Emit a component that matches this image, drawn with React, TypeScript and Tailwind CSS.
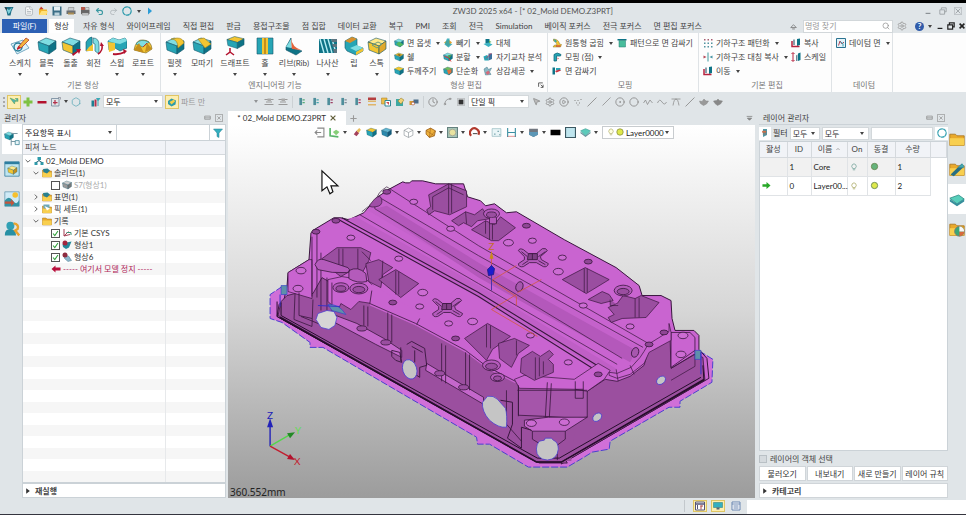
import type { ReactNode } from "react"
import {
  Circle,
  CircleDot,
  CirclePlay,
  Clock,
  FileText,
  Hexagon,
  MousePointer2,
  Redo2,
  Search,
  Settings,
  Slash,
  Spline,
  Undo2,
} from "lucide-react"

const TEAL = ["#7fdde2", "#27a5b5", "#0e7386"]
const GOLD = ["#ffe98a", "#f3c531", "#c48f1c"]

function Svg({ children, className = "size-3", box = "0 0 20 20" }: { children: ReactNode; className?: string; box?: string }) {
  return (
    <svg viewBox={box} className={`shrink-0 ${className}`} fill="none" aria-hidden="true">
      {children}
    </svg>
  )
}

function CubeShape({ top = TEAL[0], left = TEAL[1], right = TEAL[2] }: { top?: string; left?: string; right?: string }) {
  return (
    <g stroke="#14566a" strokeWidth=".6" strokeLinejoin="round">
      <path d="M1 6 9 2l10 3-7 5z" fill={top} />
      <path d="M1 6l11 4v8L2 14z" fill={left} />
      <path d="M12 10l7-5v8l-7 5z" fill={right} />
    </g>
  )
}

function Caret({ className = "" }: { className?: string }) {
  return (
    <svg viewBox="0 0 4 3" className={`w-1 h-[3px] shrink-0 ${className}`} aria-hidden="true">
      <path d="M0 0h4L2 3z" fill="#444" />
    </svg>
  )
}

const bigIcons: Record<string, ReactNode> = {
  sketch: (
    <>
      <path d="M1 8l12-4 6 8-12 6z" fill="#dff3fa" stroke="#5896b4" strokeWidth=".8" />
      <circle cx="8" cy="11" r="4" stroke="#247d99" strokeWidth="1.4" />
      <path d="M8 11 16 2l3 2-8 8z" fill="#f3b43c" stroke="#b23b2a" strokeWidth=".8" />
      <path d="M7 12l2-2 2 2-4 2z" fill="#c01f30" />
    </>
  ),
  block: <CubeShape />,
  extrude: (
    <>
      <CubeShape left={GOLD[1]} />
      <path d="M11 18l5-3-1-2 5 0-2 5-1-2-5 4z" fill="#b3122e" />
    </>
  ),
  revolve: (
    <>
      <path d="M2 15V6q3-5 6-5v13z" fill={TEAL[1]} stroke="#14566a" strokeWidth=".6" />
      <path d="M9 2q6 0 6 7v9l-4-3V8L9 7z" fill={TEAL[0]} stroke="#14566a" strokeWidth=".6" />
      <path d="M2 15l7 0V8l-4 3z" fill={GOLD[1]} />
      <path d="M14 18q5-3 4-9" stroke="#b3122e" strokeWidth="1.6" />
      <path d="M16 10l1-4 3 4z" fill="#b3122e" />
    </>
  ),
  sweep: (
    <>
      <path d="M1 5l5-3 6 2 6-2 2 3v7l-7 3-5-3-6 2z" fill={TEAL[1]} stroke="#14566a" strokeWidth=".6" />
      <path d="M1 5l5-3 6 2 6-2 2 3-7 3-5-1z" fill={TEAL[0]} />
      <path d="M1 6l7 1v7l-6 2z" fill={GOLD[1]} />
      <path d="M6 18q6 1 12-2" stroke="#b3122e" strokeWidth="1.8" />
      <path d="M16 13l4 2-3 3z" fill="#b3122e" />
    </>
  ),
  loft: (
    <>
      <path d="M1 14Q3 3 10 4q8 0 9 9l-6 4z" fill={GOLD[1]} stroke="#7c6a28" strokeWidth=".7" />
      <path d="M3 8q4-6 13-2l-6 5z" fill={TEAL[0]} stroke="#247d89" strokeWidth=".6" />
      <path d="M1 14l5-7 5 10zM12 16l2-9 5 6z" fill={GOLD[2]} />
      <path d="M10 11l4-4" stroke="#c0392b" />
    </>
  ),
  fillet: (
    <>
      <CubeShape />
      <path d="M6 3q7 0 7 9l6-5Q18 2 12 2z" fill={GOLD[1]} stroke="#9d8320" strokeWidth=".6" />
    </>
  ),
  chamfer: (
    <>
      <CubeShape />
      <path d="M6 3l7 9 6-4-7-6z" fill={GOLD[1]} stroke="#9d8320" strokeWidth=".6" />
    </>
  ),
  draft: (
    <>
      <g transform="translate(1 -1) scale(.95 .75)"><CubeShape top={GOLD[1]} /></g>
      <path d="M5 12v4l-4 3m4-3 4 3" stroke="#b3122e" strokeWidth="1.5" />
    </>
  ),
  hole: (
    <>
      <path d="M2 2h16v16H2z" fill={TEAL[1]} stroke="#14566a" strokeWidth=".6" />
      <path d="M7 2h6v16H7z" fill={GOLD[1]} />
      <path d="M9 2h2v16H9z" fill={GOLD[2]} />
    </>
  ),
  rib: (
    <>
      <path d="M2 11 7 2v10l11 3-6 4-10-5z" fill={TEAL[2]} stroke="#14566a" strokeWidth=".6" />
      <path d="M7 2q1 9 10 12l-9-1z" fill="#e4643a" />
      <path d="M2 11l5 1v-9" fill={TEAL[0]} />
    </>
  ),
  thread: (
    <>
      <path d="M1 3h18v14H1z" fill={TEAL[2]} />
      <path d="M2 3l4 14M6 3l4 14M10 3l4 14M14 3l4 14" stroke="#b6ecf2" strokeWidth="1.4" />
      <path d="M13 3h6v3h-5zM14 8h5v3h-4zM15 13h4v4h-3z" fill="#5c7480" />
    </>
  ),
  lip: (
    <>
      <path d="M1 5 8 1l5 2v7l6 2v3l-7 4-9-4-2-3z" fill={TEAL[1]} stroke="#14566a" strokeWidth=".6" />
      <path d="M1 5 8 1l5 2-7 4z" fill="#d7902c" />
      <path d="M6 12l7-3 6 3-7 3z" fill={TEAL[0]} />
      <path d="M12 16l7-4v3l-7 4z" fill={GOLD[1]} />
    </>
  ),
  stock: (
    <>
      <CubeShape top={GOLD[0]} left={GOLD[1]} right="#e0a92c" />
      <path d="M5 9l6-3 4 2-5 4z" stroke="#6e9b7c" />
    </>
  ),
}

type Tool = { label: string; icon: string; width: string; menu?: boolean }

const basicTools: Tool[] = [
  { label: "스케치", icon: "sketch", width: "w-7", menu: true },
  { label: "블록", icon: "block", width: "w-[25px]", menu: true },
  { label: "돌출", icon: "extrude", width: "w-[23px]" },
  { label: "회전", icon: "revolve", width: "w-[23px]" },
  { label: "스윕", icon: "sweep", width: "w-6", menu: true },
  { label: "로프트", icon: "loft", width: "w-7", menu: true },
]

const engineeringTools: Tool[] = [
  { label: "필렛", icon: "fillet", width: "w-[27px]", menu: true },
  { label: "모따기", icon: "chamfer", width: "w-7" },
  { label: "드래프트", icon: "draft", width: "w-[38px]", menu: true },
  { label: "홀", icon: "hole", width: "w-[22px]", menu: true },
  { label: "리브(Rib)", icon: "rib", width: "w-9", menu: true },
  { label: "나사산", icon: "thread", width: "w-[31px]", menu: true },
  { label: "립", icon: "lip", width: "w-[22px]" },
  { label: "스톡", icon: "stock", width: "w-[23px]", menu: true },
]

function BigTool({ tool }: { tool: Tool }) {
  return (
    <button className={`flex flex-col items-center ${tool.width}`}>
      <Svg className="size-5">{bigIcons[tool.icon]}</Svg>
      <span className="mt-px whitespace-nowrap leading-3">{tool.label}</span>
      {tool.menu && <Caret className="mt-1" />}
    </button>
  )
}

const smallIcons: Record<string, ReactNode> = {
  offset: <><CubeShape /><path d="M4 12l6-5 9 6-8 5z" fill="#4fb661" /></>,
  shell: <><CubeShape top={GOLD[1]} /><path d="M6 6l4-2 5 2-4 2z" fill="#7c5e1e" /></>,
  thicken: <><CubeShape top="#62c28d" /><path d="M1 5 9 2l10 3-8 4z" fill={GOLD[1]} /></>,
  subtract: <><path d="M2 9l9-6 7 6-8 8z" fill="#e3a32d" /><path d="M8 1h5v10l6 1-8 7-8-6z" fill={TEAL[1]} opacity=".85" /></>,
  split: <><CubeShape /><path d="M3 9l7 2 6 8" stroke="#d83a3a" strokeWidth="2" /><path d="M9 7l8-2-4 8z" fill="#4f9f4c" /></>,
  simplify: <><CubeShape top="#71bd5e" /><path d="M8 9l9-3v7l-6 4z" fill="#e2733c" /></>,
  replace: <><path d="M5 2h8v9H5z" fill={TEAL[2]} /><path d="M1 12l10-3 8 4-8 5z" fill="#3bb3c3" /><path d="M12 5l5 3-5 2z" fill="#62b450" /></>,
  intersect: <><path d="M1 9l7-3 3 3v8H3z" fill={TEAL[1]} /><path d="M11 3h7v11l-7 3z" fill="#3a6f9c" /><path d="M6 13 17 2" stroke="#cc3556" strokeWidth="1.5" /></>,
  inlay: <><path d="M2 6l6-4 3 5 6-3-4 8 3 5-11 1z" fill="#8db9c5" stroke="#3e7888" /><path d="M5 13l6-4 3 5-5 4z" fill="#d36b7b" /></>,
  bend: <><path d="M3 2q11 1 12 10l4 1-2 5H2l3-4h5q-1-7-7-8z" fill={GOLD[1]} stroke="#8a752a" /><path d="M3 2q6 1 7 5l-4 2z" fill="#3ba89f" /><path d="M8 16h9" stroke="#c12b3b" strokeWidth="2" /></>,
  morph: <><path d="M4 5q6-6 14 0l-1 3H9v10H4z" fill={TEAL[1]} stroke="#0e6375" strokeWidth="1.5" /><path d="M11 11l3 2-3 2z" fill="#d55" /></>,
  wrap: <><path d="M1 3h5v14H1z" fill={TEAL[2]} /><path d="M8 4h9v5H8z" fill={TEAL[1]} /><path d="M9 13l-3-3 9-3 3 2z" fill="#cb3342" /></>,
  wrapPattern: <><path d="M1 2h18v3H1z" fill={TEAL[2]} /><path d="M4 5h13v13H4z" fill="#49bd9c" stroke="#277b70" /></>,
  pattern: <>{[3, 10, 17].map((x) => [3, 10, 17].map((y) => <rect key={`${x}-${y}`} x={x - 1} y={y - 1} width="3" height="3" fill={y === 3 ? "#a55d71" : "#5294a0"} />))}</>,
  mirror: <><path d="M10 1v18" stroke="#3e999e" strokeWidth="2" /><path d="M1 7l6 3-6 3z" fill="#b44958" /><path d="M19 7l-6 3 6 3z" fill="#4694a4" /></>,
  move: <><path d="M4 3h4v11H4z" fill="#8ba1ac" /><path d="M12 2l6-1v13l-6 2z" fill={TEAL[2]} /><path d="M2 6v11h15" stroke="#b7233f" strokeWidth="3" /></>,
  scale: <><path d="M4 2v16M1 4l3-3 3 3M1 16l3 3 3-3" stroke="#b7233f" strokeWidth="2" /><path d="M10 7l3-2v13h-3z" fill="#698a99" /><path d="M14 3l5-2v15l-5 2z" fill={TEAL[2]} /></>,
  datum: <><path d="M1 1h18v18H1z" fill="#e4f3f9" stroke="#2b7391" strokeWidth="2" /><path d="M5 15l3-9 4 6 4-4" stroke="#b44758" strokeWidth="2" /><path d="M9 8l5 3v6" stroke="#3a9eb0" strokeWidth="2" /></>,
}

function SmallTool({ icon, label, menu }: { icon: string; label: string; menu?: boolean }) {
  return (
    <button className="flex h-[14px] items-center gap-[3px] whitespace-nowrap">
      <Svg className="size-[10px]">{smallIcons[icon]}</Svg>
      {label}
      {menu && <Caret className="ml-0.5" />}
    </button>
  )
}

function Group({ title, width, children, launcher }: { title: string; width: string; children: ReactNode; launcher?: boolean }) {
  return (
    <section className={`flex shrink-0 flex-col border-r border-[#dfe3e6] ${width}`}>
      <div className="flex flex-1 pt-[3px]">{children}</div>
      <div className="flex h-[14px] items-center text-[#777]">
        <h2 className="flex-1 text-center">{title}</h2>
        {launcher && (
          <button aria-label="형상 편집 설정" className="mr-[3px]">
            <Svg className="size-[6px]"><path d="M2 16V3h14M9 9l8 8M17 9v9H9" stroke="#555" strokeWidth="3" /></Svg>
          </button>
        )}
      </div>
    </section>
  )
}

function Select({ label, value, className = "" }: { label: string; value: string; className?: string }) {
  return (
    <div className={`flex shrink-0 items-center border border-[#d3d8db] bg-white ${className}`}>
      <select aria-label={label} className="h-full min-w-0 flex-1 appearance-none bg-transparent pl-0.5 outline-none">
        <option>{value}</option>
      </select>
      <Caret className="pointer-events-none mr-1" />
    </div>
  )
}

function Tb({ label, children, active }: { label: string; children?: ReactNode; active?: boolean }) {
  return (
    <button
      aria-label={label}
      className={`flex h-[14px] w-[14px] shrink-0 items-center justify-center ${active ? "border border-[#dfc564] bg-[#fdeeb0]" : ""}`}
    >
      {children}
    </button>
  )
}

function QuickAccess() {
  return (
    <div className="flex flex-[9] items-center">
      <Svg className="mr-2 size-[10px]">
        <path d="M1 2h18l-4 8-2 9H7L5 10z" fill="#1f6f86" />
        <path d="M4 4l6 4 6-5-4 10-3 3z" fill="#7fd0da" />
        <path d="M1 2l5 2-1 5z" fill="#333" />
      </Svg>
      <Tb label="새로 만들기"><FileText className="size-[10px]" fill="#fff" stroke="#a3abb0" /></Tb>
      <Tb label="열기">
        <Svg className="size-[10px]"><path d="M2 5h7l2 2h7v11H2z" fill="#f1b62b" /><path d="M2 18l5-8h13l-4 8z" fill="#ffe07a" /><path d="M3 7 6 1l5 5z" fill="#c83a2e" /></Svg>
      </Tb>
      <Tb label="저장">
        <Svg className="size-[10px]"><path d="M1 1h18v18H1z" fill="#3a6d85" /><path d="M4 1h12v8H4z" fill="#e6eff3" /><path d="M5 13h10v6H5z" fill="#bcd3dc" /></Svg>
      </Tb>
      <Tb label="인쇄">
        <Svg className="size-[10px]"><path d="M1 9h18v7H1z" fill="#6a6f74" /><path d="M5 3h11l-1 6H4z" fill="#cdd1d4" stroke="#777" /><path d="M4 13h12v4H4z" fill="#a98c53" /></Svg>
      </Tb>
      <Tb label="내보내기">
        <Svg className="size-[10px]"><path d="M2 8h17v8H2z" fill="#666" /><path d="M2 2h8v6H2z" fill="#b75a4c" /><path d="M11 3h7v5h-7zM4 14h13v4H4z" fill="#d4d6d8" stroke="#777" /></Svg>
      </Tb>
      <Tb label="실행 취소"><Undo2 className="size-[9px]" stroke="#3e9aa3" strokeWidth={3} /></Tb>
      <Tb label="다시 실행"><Redo2 className="size-[9px]" stroke="#aab0b4" strokeWidth={2} /></Tb>
      <Tb label="재생성"><Circle className="size-[10px]" stroke="#2d9aac" strokeWidth={3} strokeDasharray="7 3" /></Tb>
      <Caret className="mx-[3px]" />
      <Svg className="ml-0.5 size-2"><path d="M5 1l10 9-10 9z" fill="#2b9cd6" /></Svg>
    </div>
  )
}

function WindowButtons({ dark }: { dark?: boolean }) {
  const color = dark ? "#222" : "#8b9195"
  return (
    <div className={`flex items-center ${dark ? "gap-[3px]" : "gap-[7px]"}`}>
      <button aria-label="최소화"><Svg className="size-2"><path d="M4 16h12" stroke={color} strokeWidth="3" /></Svg></button>
      <button aria-label="복원"><Svg className="size-2"><path d="M6 6V2h12v10h-4M2 7h12v11H2z" stroke={color} strokeWidth={dark ? 3 : 1.8} /></Svg></button>
      <button aria-label="닫기"><Svg className="size-2">{!dark && <path d="M1 1h18v18H1z" stroke={color} />}<path d="M4 4l12 12M16 4 4 16" stroke={color} strokeWidth={dark ? 4 : 1.8} /></Svg></button>
    </div>
  )
}

const tabs = ["자유 형식", "와이어프레임", "직접 편집", "판금", "용접구조물", "점 집합", "데이터 교환", "복구", "PMI", "조회", "전극", "Simulation", "베이직 포커스", "전극 포커스", "면 편집 포커스"]

function TopBar() {
  return (
    <header>
      <div className="h-[3px] bg-black" />
      <div className="flex h-4 items-center pl-1 pr-1">
        <QuickAccess />
        <h1 className="text-[#555]">ZW3D 2025 x64 - [* 02_Mold DEMO.Z3PRT]</h1>
        <div className="flex flex-[7] justify-end"><WindowButtons /></div>
      </div>
      <nav className="flex h-[14px] items-stretch pl-0.5">
        <button className="w-[45px] bg-[#2c60b4] text-white">파일(F)</button>
        <button className="ml-0.5 w-[25px] bg-white text-[#333]">형상</button>
        <div className="flex flex-1 items-center pl-[3px]">
          {tabs.map((tab) => (
            <button key={tab} className="whitespace-nowrap px-1.5 text-[#444]">{tab}</button>
          ))}
        </div>
        <div className="flex items-center gap-1">
          <Svg className="mr-0.5 size-[7px]"><path d="M2 13l8-8 8 8zM6 17h8" stroke="#666" strokeWidth="2" /></Svg>
          <label className="flex h-[13px] w-[90px] items-center border border-[#d2d7da] bg-white">
            <input aria-label="명령 찾기" placeholder="명령 찾기" className="w-0 flex-1 pl-px outline-none placeholder:text-[#999]" />
            <Search className="mr-0.5 size-2 text-[#888]" />
          </label>
          <button aria-label="설정"><Settings className="size-[10px] text-[#999]" /></button>
          <button aria-label="도움말" className="ml-1 flex size-[9px] items-center justify-center rounded-full bg-[#315caa] text-[8px] font-bold leading-none text-white">?</button>
          <Caret />
          <WindowButtons dark />
        </div>
      </nav>
    </header>
  )
}

function Ribbon() {
  return (
    <div className="flex h-[59px] overflow-hidden bg-[#fdfdfd] text-[#444]">
      <Group title="기본 형상" width="w-[161px] pl-1.5">
        {basicTools.map((tool) => <BigTool key={tool.label} tool={tool} />)}
      </Group>
      <Group title="엔지니어링 기능" width="w-[229px]">
        {engineeringTools.map((tool) => <BigTool key={tool.label} tool={tool} />)}
      </Group>
      <Group title="형상 편집" width="w-[158px] pl-1" launcher>
        <div className="w-[49px]">
          <SmallTool icon="offset" label="면 옵셋" menu />
          <SmallTool icon="shell" label="쉘" />
          <SmallTool icon="thicken" label="두께주기" />
        </div>
        <div className="w-10">
          <SmallTool icon="subtract" label="빼기" menu />
          <SmallTool icon="split" label="분할" menu />
          <SmallTool icon="simplify" label="단순화" />
        </div>
        <div>
          <SmallTool icon="replace" label="대체" />
          <SmallTool icon="intersect" label="자기교차 분석" />
          <SmallTool icon="inlay" label="상감세공" menu />
        </div>
      </Group>
      <Group title="모핑" width="w-[151px] pl-1">
        <div className="w-[65px]">
          <SmallTool icon="bend" label="원통형 굽힘" menu />
          <SmallTool icon="morph" label="모핑 (점)" menu />
          <SmallTool icon="wrap" label="면 감싸기" />
        </div>
        <div>
          <SmallTool icon="wrapPattern" label="패턴으로 면 감싸기" />
        </div>
      </Group>
      <Group title="기본 편집" width="w-[133px] pl-1">
        <div className="w-[88px]">
          <SmallTool icon="pattern" label="기하구조 패턴화" menu />
          <SmallTool icon="mirror" label="기하구조 대칭 복사" menu />
          <SmallTool icon="move" label="이동" menu />
        </div>
        <div>
          <SmallTool icon="move" label="복사" />
          <SmallTool icon="scale" label="스케일" />
        </div>
      </Group>
      <Group title="데이텀" width="w-[61px] pl-1">
        <SmallTool icon="datum" label="데이텀 면" menu />
      </Group>
    </div>
  )
}

const curveIcons: [string, ReactNode][] = [
  ["선택", <MousePointer2 className="size-[9px]" fill="#bbb" />],
  ["옵션", <Settings className="size-[10px]" />],
  ["재생", <CirclePlay className="size-[10px]" />],
  ["점", <Svg className="size-[10px]"><path d="M3 7h2m4 0h2m4-2h2M6 12h2m4 0h2M9 16h2" stroke="currentColor" strokeWidth="2" /></Svg>],
  ["선", <Slash className="size-[10px]" />],
  ["중간점", <Slash className="size-[9px]" />],
  ["중심", <CircleDot className="size-[10px]" />],
  ["원", <Circle className="size-[10px]" />],
  ["꺾은선", <Svg className="size-[10px]"><path d="M1 12l4-6 4 9 5-9 5 6" stroke="currentColor" strokeWidth="1.5" /></Svg>],
  ["곡선", <Svg className="size-[10px]"><path d="M1 12q4-10 9-2t9 0" stroke="currentColor" strokeWidth="1.5" /></Svg>],
  ["호", <Svg className="size-[10px]"><path d="M1 4h18M4 17Q6 4 10 4t6 13" stroke="currentColor" strokeWidth="1.5" /></Svg>],
  ["접선", <Slash className="size-[10px]" />],
  ["면", <Svg className="size-[10px]"><path d="M1 8l5 1 4-5 4 4 5 0-4 6-6 3-6-4z" fill="#999" stroke="currentColor" /></Svg>],
  ["곡면", <Svg className="size-[10px]"><path d="M1 8l6-1 3-3 3 3 6 1-4 6-6 3-5-4z" fill="#888" stroke="currentColor" /></Svg>],
]

function SelectionBar() {
  return (
    <div role="toolbar" aria-label="선택" className="flex h-[19px] items-center pl-[3px] text-[#888]">
      <span className="mr-0.5 h-[10px] border-l-2 border-dotted border-[#aaa]" />
      <Tb label="필터" active><Svg className="size-[10px]"><path d="M2 2l9 12 1-5 5-1zM12 3h6v6" fill="#52b4b3" stroke="#5c9c4b" /></Svg></Tb>
      <Tb label="추가"><Svg className="size-[10px]"><path d="M7 1h6v6h6v6h-6v6H7v-6H1V7h6z" fill="#7dc242" /></Svg></Tb>
      <Tb label="제거"><Svg className="size-[10px]"><path d="M1 8h18v5H1z" fill="#b3122e" /></Svg></Tb>
      <Tb label="영역 선택"><Svg className="size-[10px]"><path d="M1 3h15v15H1z" stroke="#6a7f94" strokeWidth="1.5" /><path d="M8 6v9M4 11h9" stroke="#b3304a" strokeWidth="2.5" /><path d="M14 1h5v4" stroke="#667" /></Svg></Tb>
      <Caret className="mx-px" />
      <Tb label="다각형"><Hexagon className="size-[10px]" stroke="#69aebc" /></Tb>
      <span className="w-1.5" />
      <Tb label="모델 필터"><Svg className="size-[10px]"><path d="M1 7h5v12H1z" fill="#1d7f91" /><path d="M7 5h4v14H7z" fill="#b3304a" /><path d="M10 2h9l-4 6v10h-2V8z" fill="#3ca8b5" /></Svg></Tb>
      <Select label="필터 유형" value="모두" className="mr-0.5 h-[13px] w-[60px] text-[#222]" />
      <Tb label="파트" active><Svg className="size-[10px]"><path d="M2 8l7-5 9 4-1 8-8 4-7-5z" fill="#2c9caa" /><path d="M5 10l9-5 2 4-7 6z" fill="#f4cf46" /></Svg></Tb>
      <div className="flex h-[13px] w-[83px] items-center">
        <select aria-label="범위" className="h-full flex-1 appearance-none pl-0.5 text-[#999]"><option>파트 만</option></select>
        <Caret className="mr-1 opacity-50" />
      </div>
      {["정렬", "잠금"].map((name) => (
        <Tb key={name} label={name}><Svg className="size-[10px]"><path d="M1 5h18M4 10h12M1 15h18" stroke="#999" strokeWidth="2" /><path d="M7 3h7v5H7z" fill="#aaa" /></Svg></Tb>
      ))}
      <span className="mx-0.5 h-3 w-px bg-[#ccd1d4]" />
      {["#55ad7a", "#45a3ac", "#9a3f63", "#7f8a97", "#b43a5c"].map((color, i) => (
        <Tb key={color} label={`트리 ${i + 1}`}><Svg className="size-[9px]"><path d="M3 2h6v16H3z" fill="#4f8e9b" /><path d="M10 5h5v3h-5zM10 11h5v3h-5z" fill={color} /></Svg></Tb>
      ))}
      <Tb label="속성"><Svg className="size-[10px]"><path d="M2 1h16v5H2z" fill="#b53f3f" /><path d="M2 7h16v3H2zM2 14h16v3H2z" fill="#dfb56a" /></Svg></Tb>
      <Tb label="복사"><Svg className="size-[10px]"><path d="M1 2h11v12H1z" fill="#ebbd49" stroke="#a87a1b" /><path d="M8 7h11v11H8z" fill="#fff" stroke="#2f8895" strokeWidth="2" /><path d="M10 10h6v6z" fill="#cf4f4f" /></Svg></Tb>
      <Tb label="붙여넣기"><Svg className="size-[10px]"><path d="M2 4h14v14H2z" fill="#3fa8a1" /><path d="M6 8l6-6 6 4-6 8z" fill="#f0d176" stroke="#907625" /></Svg></Tb>
      <Tb label="연결"><Svg className="size-[10px]"><path d="M1 8h10v8H1z" fill="#d49a31" /><path d="M9 5h10v8H9z" fill="#4b6c89" /><circle cx="8" cy="13" r="3" fill="#fff" stroke="#933" /></Svg></Tb>
      <span className="mx-0.5 h-3 w-px bg-[#ccd1d4]" />
      <Tb label="기록"><Clock className="size-[10px]" /></Tb>
      <Tb label="경로"><Spline className="size-[9px]" /></Tb>
      <Tb label="정지"><Svg className="size-2"><path d="M1 1h18v18H1z" stroke="#888" strokeWidth="1" /><path d="M4 4h12v12H4z" fill="#333" /></Svg></Tb>
      <Select label="픽 방식" value="단일 픽" className="h-[13px] w-[61px] text-[#222]" />
      {curveIcons.map(([name, icon]) => <Tb key={name} label={name}>{icon}</Tb>)}
    </div>
  )
}

function PanelTitle({ title }: { title: string }) {
  return (
    <div className="flex h-[13px] shrink-0 items-center gap-1 pl-1 pr-[3px]">
      <h2 className="flex-1 text-[#444]">{title}</h2>
      <button aria-label="고정"><Svg className="size-[7px]"><path d="M2 6h16v9H2zM2 11h16" stroke="#888" strokeWidth="2" /></Svg></button>
      <button aria-label="닫기"><Svg className="size-2"><path d="M1 1h18v18H1zM6 6l8 8M14 6l-8 8" stroke="#888" strokeWidth="1.6" /></Svg></button>
    </div>
  )
}

const folder = <><path d="M1 4h7l2 2h9v12H1z" fill="#e9a92a" stroke="#a8721a" /><path d="M1 9h18v9H1z" fill="#f8cf4f" /></>

type Node = { label: string; level: number; open?: boolean; checked?: boolean; icon: ReactNode; tone?: string }

const solidFolder = <>{folder}<path d="M2 2l9-1 5 4-6 6-7-3z" fill="#28808f" /></>

const nodes: Node[] = [
  { label: "02_Mold DEMO", level: 0, open: true, icon: <><path d="M7 2h7v6H7zM1 12h6v6H1zM13 12h6v6h-6z" fill="#2f9bab" /><path d="M10 8v3M4 13l6-4 6 4" stroke="#3c7584" strokeWidth="2" /></> },
  { label: "솔리드(1)", level: 1, open: true, icon: solidFolder },
  { label: "S7(형상1)", level: 2, checked: false, tone: "text-[#aaa]", icon: <CubeShape top="#ccc" left="#999" right="#777" /> },
  { label: "표면(1)", level: 1, open: false, icon: solidFolder },
  { label: "픽 세트(1)", level: 1, open: false, icon: <>{folder}<path d="M3 1h12v8H3z" fill="#6da9b8" /><path d="M5 4l5 9 6-4z" fill="#fff" /></> },
  { label: "기록", level: 1, open: true, icon: folder },
  { label: "기본 CSYS", level: 2, checked: true, icon: <><path d="M4 2v14l12-3M4 16l9-9" stroke="#a33f55" strokeWidth="2" /><path d="M9 9h9v5" stroke="#3c8f72" strokeWidth="2" /></> },
  { label: "형상1", level: 2, checked: true, icon: <><path d="M1 8l8-3 10-2-5 12-6 3-6-4z" fill="#23899a" /><circle cx="6" cy="6" r="5" fill="#a3263d" /></> },
  { label: "형상6", level: 2, checked: true, icon: <><path d="M5 7l8 1 6 9-7 2-7-6z" fill="#8fb8cd" stroke="#49788f" /><circle cx="6" cy="6" r="5" fill="#8e2b3f" /></> },
]

function Strip({ items, side }: { items: { name: string; icon: ReactNode }[]; side: "left" | "right" }) {
  const active = side === "left" ? 0 : 2
  return (
    <div className={`flex shrink-0 flex-col ${side === "left" ? "w-5" : "w-[18px] pt-[13px]"}`}>
      {items.map((item, i) => (
        <button key={item.name} aria-label={item.name} className={`flex h-[30px] items-center justify-center ${i === active ? "bg-white" : ""}`}>
          <Svg className="size-4">{item.icon}</Svg>
        </button>
      ))}
    </div>
  )
}

const leftStrip = [
  { name: "관리자", icon: <><g transform="scale(.62)"><CubeShape /></g><path d="M9 13h6M9 10v8M9 3h8" stroke="#7c9aa5" strokeWidth="1.3" /><path d="M14 12h5v5h-5z" fill="#eaf5f8" stroke="#45899b" /></> },
  { name: "파트", icon: <><path d="M1 1h18v18H1z" fill="#bfe5f0" stroke="#3a7fa0" /><path d="M1 1h18v3H1z" fill="#2d7ea0" /><g transform="translate(4 5) scale(.65)"><CubeShape top={GOLD[0]} left={GOLD[1]} right={GOLD[2]} /></g></> },
  { name: "장면", icon: <><path d="M1 1h18v18H1z" fill="#cfeaf6" stroke="#6a9ab2" /><path d="M1 12q5-7 10 0t8-1v8H1z" fill="#3293a4" /><circle cx="14" cy="5" r="3.5" fill="#f6c02d" /><path d="M1 13h8v-3l4 5-4 4v-3H1z" fill="#c4553c" /></> },
  { name: "역할", icon: <><circle cx="8" cy="6" r="5" fill="#31a0b4" /><path d="M1 18q0-8 7-8t7 8z" fill="#2790a4" /><path d="M12 3q7 1 5 7l-3 2 5 6" stroke="#e9a32e" strokeWidth="3" /></> },
]

const rightStrip = [
  { name: "파일", icon: folder },
  { name: "재사용", icon: <>{folder}<path d="M2 17 16 3l3 4L6 19z" fill="#286f83" /><path d="M11 8l6-5 2 5z" fill="#45a7ae" /></> },
  { name: "레이어", icon: <><path d="M1 9l11-4 7 5-9 6z" fill="#58cfbb" stroke="#2c8c84" /><path d="M1 10l9 6 9-6v3l-9 6-9-6z" fill="#378f9c" /></> },
  { name: "색상", icon: <>{folder}<circle cx="13" cy="13" r="6" fill="#3aa678" stroke="#777" /><path d="M13 13l6 0a6 6 0 0 1-6 6z" fill="#d96a3d" /><path d="M13 13V7a6 6 0 0 1 6 6z" fill="#f7f7f7" /></> },
]

function TreeRow({ node }: { node: Node }) {
  const indent = ["pl-0.5", "pl-2.5", "pl-7"][node.level]
  return (
    <li className="grid flex-1 grid-cols-[143px_1fr] even:bg-[#f6f6f6]">
      <div className={`flex items-center gap-0.5 whitespace-nowrap border-r border-[#e7e9eb] ${indent} ${node.tone ?? "text-[#333]"}`}>
        {node.open !== undefined && (
          <Svg className="mr-px size-[6px]"><path d={node.open ? "M2 6l8 8 8-8" : "M6 2l8 8-8 8"} stroke="#555" strokeWidth="3" /></Svg>
        )}
        {node.checked !== undefined ? (
          <label className="flex items-center gap-0.5">
            <input type="checkbox" defaultChecked={node.checked} className="peer sr-only" />
            <Svg className="size-[9px] border border-[#555] bg-white *:opacity-0 peer-checked:*:opacity-100"><path d="M3 10l5 6 9-13" stroke="#30a03a" strokeWidth="3" /></Svg>
            <Svg className="size-[10px]">{node.icon}</Svg>
            {node.label}
          </label>
        ) : (
          <>
            <Svg className="size-[10px]">{node.icon}</Svg>
            {node.label}
          </>
        )}
      </div>
    </li>
  )
}

function Manager() {
  return (
    <aside className="flex w-[226px] shrink-0 flex-col">
      <PanelTitle title="관리자" />
      <div className="flex flex-1 pl-0.5">
        <Strip items={leftStrip} side="left" />
        <div className="flex flex-1 flex-col border border-[#cbd2d7] bg-white">
          <div className="flex h-4 shrink-0 border-b border-[#cbd2d7]">
            <Select label="표시" value="주요항목 표시" className="w-[93px] border-0 text-[#222]" />
            <input aria-label="검색" className="w-0 flex-1 border-x border-[#cbd2d7]" />
            <button aria-label="필터" className="flex w-[15px] items-center justify-center">
              <Svg className="size-[10px]"><path d="M1 2h18l-7 8v9l-4-2v-7z" fill="#35b0c0" stroke="#217f90" /></Svg>
            </button>
          </div>
          <div className="grid h-[14px] shrink-0 grid-cols-[143px_1fr] border-b border-[#d5d9dd] bg-[#f1f3f7] text-[#444]">
            <span className="border-r border-[#d5d9dd] pl-0.5">피쳐 노드</span>
          </div>
          <ul className="flex flex-1 flex-col">
            {nodes.map((node) => <TreeRow key={node.label} node={node} />)}
            <li className="grid flex-1 grid-cols-[143px_1fr] even:bg-[#f6f6f6]">
              <div className="flex items-center gap-0.5 whitespace-nowrap border-r border-[#e7e9eb] pl-7 text-[#ae2459]">
                <Svg className="size-[10px]"><path d="M1 10l8-7v4h10v6H9v4z" fill="#b80f3c" /></Svg>
                ----- 여기서 모델 정지 -----
              </div>
            </li>
            {Array.from({ length: 18 }, (_, i) => (
              <li key={i} className="grid flex-1 grid-cols-[143px_1fr] even:bg-[#f6f6f6]">
                <span className="border-r border-[#e7e9eb]" />
              </li>
            ))}
          </ul>
          <button className="flex h-[15px] shrink-0 items-center gap-1 border-t-2 border-[#cbd2d7] pl-0.5 font-bold text-[#444]">
            <Svg className="size-[6px]"><path d="M4 1l12 9-12 9z" fill="#333" /></Svg>재실행
          </button>
        </div>
      </div>
    </aside>
  )
}

const bores: [number, number, number][] = [
  [415, 201, 4], [352, 237, 4], [452, 228, 4], [400, 258, 4], [302, 270, 5], [299, 288, 5], [424, 292, 5], [421, 306, 4],
  [450, 323, 4], [474, 321, 5], [510, 242, 5], [534, 240, 4], [564, 257, 4], [560, 271, 5], [585, 305, 4], [632, 326, 4],
  [532, 335, 4], [570, 362, 4], [685, 335, 5], [683, 354, 5], [533, 423, 5], [566, 422, 5],
]

const darkBores: [number, number][] = [[394, 302], [457, 338], [528, 225], [590, 261], [388, 191], [337, 220], [317, 231], [651, 344], [600, 374], [666, 332]]

function Spider({ x, y }: { x: number; y: number }) {
  return (
    <g transform={`translate(${x} ${y})`} strokeLinejoin="round">
      <path d="M-15-7q1-3 5-1l5 4h8l6-5q4-1 5 2l-7 6 1 3 7 4q-1 4-5 3l-7-4h-7l-6 4q-5 1-5-3l6-4v-3z" fill="#b55bbd" />
      <path d="M-5-4l-1 6h10l0-6z" fill="#7f3f85" />
      <path d="M-12-6l6 5M12-6l-7 5M-11 7l6-4M12 7l-7-4M-1-4v6" />
    </g>
  )
}

function Mold() {
  return (
    <svg viewBox="228 124 530 374" preserveAspectRatio="xMidYMid slice" fill="none" className="absolute inset-0 h-full w-full" role="img" aria-label="02_Mold DEMO">
      <path
        d="M283 286l-12 8v24l12 4 28 20v5h13l154 90 1 7h12l39 23h39l17-10 8-5 17-3 1-8 59-34h11v-6l32-19 1-23-16-10z"
        fill="#d06fd8" stroke="#4b3fd0" strokeDasharray="7 2"
      />
      <path
        d="M278 316l2-12 5-5 3-14 1-13 21-13 2-27 3-3 20-12 7 0 8 2 15-7 14-16 12-8 13-7 3 1 4 0 2-2 11 0 13 3h28l4 13 13 4 5 5 9-2 12 9 10-1 48 28 52 28 23 18 3 10h19l10 5 1 18 3 12h19l5 5v14l8 9 2 20-145 84h-25z"
        fill="#c964d0" stroke="#38163d" strokeWidth="1"
      />

      {/* channel across the core */}
      <path d="M368 209 382 198l98 57 170 97-5 14-22-9-143-82z" fill="#c462cb" />
      <path d="M376 208l12-3 92 57 158 88-6 12-152-85z" fill="#b458bb" />
      <path d="M349 218l8-2 123 69 139 84-4 8-135-80z" fill="#bf5fc6" />
      <g stroke="#35163a" strokeWidth=".7">
        <path d="M388 186l92 59 172 99M383 198l97 57 165 92M376 208l104 63 144 87M361 214l119 69 139 81" />
        <path d="M343 217l137 75 130 80M340 219l140 77 127 80" strokeWidth="1.1" />
        <path d="M382 198q-7 3-6 10M388 186q-10 6-10 13l-15 12" />
        <path d="M376 198q6-5 7 1t-6 7-6-2z" fill="#a04fa7" />
      </g>

      {/* right wall */}
      <path d="M589 391l18-12 12 2 13-5 14-11 4-14 22-14 1 31 23-14 9 3 2 23-144 84z" fill="#9b4f9f" stroke="#38163d" strokeWidth=".8" />
      <path d="M673 332h19l5 5v13l-24 17z" fill="#c964d0" stroke="#38163d" strokeWidth=".8" />
      <path d="M646 351l4-7 21-13v-8l2 9v8l-22 12-5 11-14 11-13 4-8-3 0-3 8 1 14-6 9-10z" fill="#c964d0" stroke="#38163d" strokeWidth=".7" />
      <path d="M673 368l24-14M618 369l2 12M632 365l4 9M697 350v16l-24 14" stroke="#38163d" strokeWidth=".7" />

      {/* front wall */}
      <path d="M279 315l3-14 6-6 8-2 18 0 9-16 24 14 28 4 57 32 50 27 23 15 16 15 4 16 16 21 2 10 12 5 14 27h-28z" fill="#9b4f9f" stroke="#38163d" strokeWidth=".8" />
      <path d="M289 272l21-13 3 0 0 39-24-7z" fill="#c964d0" stroke="#38163d" strokeWidth=".7" />
      <path d="M329 279l14-3 26 4 7 7-3 16-13-2-8 8-10-6-3 7-10-9z" fill="#c964d0" stroke="#38163d" strokeWidth=".7" />
      <path d="M373 284l45 27 51 27 19 15 30 20-1 10-29-15-21-16-50-27-46-20z" fill="#c964d0" />
      <path d="M371 303l46 20 50 27 21 16 29 15M418 324l3-6" stroke="#38163d" strokeWidth=".8" />
      <path d="M373 290l-2 13" stroke="#38163d" strokeWidth=".8" />
      <path d="M337 315l21 8 27 15 18 12v7l-26-13-43-23zM428 363l57 34v7l-58-34z" fill="#c467cb" stroke="#38163d" strokeWidth=".8" />

      {/* near corner tower */}
      <path d="M519 384l58-3 12 10v26l-13 17-3 27h-34l-6-29-14-14z" fill="#9b4f9f" />
      <path d="M520 383l12-7 48 5 9 10v26l-11 1-34-2-24-1z" fill="#a555aa" stroke="#38163d" strokeWidth=".8" />
      <path d="M516 379l10-4 50 4 24-16 12 7-6 9-17 12-12-2-56-1z" fill="#c964d0" stroke="#38163d" strokeWidth=".7" />
      <path d="M526 420l24-3 39 0-22 14h-33l-8-5z" fill="#c467cb" stroke="#38163d" strokeWidth=".8" />
      <path d="M534 431v8l8 5v15M567 431v8l-8 6v15M520 385v31M549 382l-2 35M553 383l-2 34M577 381v17h8v-17M577 389h8M519 390h70M508 390v34l15 17" stroke="#38163d" strokeWidth=".8" />

      {/* ribs and notches in the front wall */}
      <path d="M313 236v60M318 233v64M322 252v58M328 277v38M333 282v32M365 305v20M369 306v20M389 312v28M393 314v28M443 343v38M447 345v38M467 352v36M471 354v36M296 293l-1 26 18 7 1-27M300 292v23l13 3M302 316l22 9" stroke="#38163d" strokeWidth=".8" />
      <path d="M408 344l5-3 13 7 2 17-7 2v10l-6-4M393 350l8 2 2 10-6-2-4-4zM402 347v14M413 346l11 6M416 350v12" stroke="#38163d" strokeWidth=".9" strokeLinejoin="round" />
      <path d="M502 400l12 2v22l-5 14 14 10v-21l10 3" stroke="#38163d" strokeWidth="1" />
      <path d="M278 301v15l260 146h25l143-82-1-15M282 302v13l257 143h22l142-81" stroke="#260d2b" strokeWidth="1" />
      <path d="M281 317l257 145h25l143-83" stroke="#260d2b" strokeWidth="1.5" />

      {/* pockets */}
      <g fill="#9a4ea0" stroke="#38163d" strokeWidth=".7" strokeLinejoin="round">
        <path d="M430 194l20-11 18 7v16l-17 8-15-4-6 4-2-5 4-3zM450 183v30M453 183v29M434 196l16-9 15 7M434 196v13" />
        <path d="M453 220l14-9 9 3 8-6 7 10-12 2-6 6-8-4-5 3zM467 211l1 12" />
        <path d="M473 229l14-9 9 4 6-8 15 11-17 13h-7zM487 220v13M491 222v17M494 223v16" />
        <path d="M323 258l15-11h24l10 5-2 8-6 11-10-2-12 7-12-9zM340 248v22M344 248v19M359 248v22M363 251l9 9" />
        <path d="M367 263l13-4 14 8-10 7-2 13-12-6zM384 260l-1 22" />
        <path d="M380 279l17-10 23 14-18 14zM397 270v24M400 271v23" />
        <path d="M564 279l23-12 24 12-23 14zM586 268v24M589 268v24" />
        <path d="M590 299l14-8 7 3 4 6-12 3zM610 307l9-4 6-8 12 3 6-3 18 7-13 15-24 1-11 4-3-5 6-3zM637 298v19M641 297v20M612 299v6l8 0" />
        <path d="M466 338l23-15 23 13-18 13-6 11zM488 324v23M492 325v23" />
        <path d="M500 343l16-5 15 7-11 8-7 14-12-9zM518 340v15" />
        <path d="M523 358l11-7 8 5 9-6 4 4-5 5 5 5v8l-19 8-14-8zM537 357v22M541 357v19M545 361v13" />
      </g>
      <path d="M316 264q3-7 9-5l24 8q4 4-1 5-15 1-29-3zM350 270q9-5 17 3l1 8q-10 2-18-3z" fill="#b45bbb" stroke="#38163d" strokeWidth=".8" />
      <g fill="#b45bbb" stroke="#38163d" strokeWidth=".8">
        {([[342, 287, 8], [360, 288, 9], [493, 213, 8], [625, 290, 9], [493, 365, 9], [499, 377, 7]] as const).map(([x, y, r]) => (
          <g key={`${x}-${y}`}>
            <ellipse cx={x} cy={y} rx={r} ry={r * 0.6} />
            <ellipse cx={x} cy={y + 1} rx={r - 3} ry={r * 0.35} fill="#9a4ea0" />
          </g>
        ))}
        <path d="M491 217l0 6 7 0 0-6" />
      </g>
      <g stroke="#38163d" strokeWidth=".8">
        {bores.map(([x, y, r]) => <ellipse key={`${x}-${y}`} cx={x} cy={y} rx={r} ry={r * 0.65} fill="#cc6cd3" />)}
        {darkBores.map(([x, y]) => <ellipse key={`${x}-${y}`} cx={x} cy={y} rx="4" ry="2.4" fill="#8f4695" />)}
        {[[363, 328], [387, 342], [441, 373], [465, 387]].map(([x, y]) => <ellipse key={x} cx={x} cy={y} rx="5" ry="2.6" fill="#9a4ea0" />)}
        <Spider x={449} y={307} />
        <Spider x={535} y={257} />
        <ellipse cx="521" cy="286" rx="3.5" ry="5" fill="#a757ae" transform="rotate(20 521 286)" />
        <ellipse cx="637" cy="352" rx="3.5" ry="5" fill="#a757ae" transform="rotate(20 637 352)" />
      </g>

      {/* through openings */}
      <g fill="#c5c5c5" stroke="#4b3fd0" strokeWidth=".8">
        <path d="M319 313l9-3 7 1 3 6-2 8-6 4-8-2-5-8z" fill="#d6d6d6" />
        <ellipse cx="411" cy="369" rx="7" ry="10" transform="rotate(-18 411 369)" />
        <path d="M489 396q6-1 10 3l8 9q2 7 1 19-8 1-17-7-8-9-7-18z" />
        <path d="M541 441l5-1 1-2h6l2 2q5 2 5 9-1 10-11 11-11-1-11-11 0-5 3-8z" />
        <ellipse cx="663" cy="380" rx="5" ry="3.6" transform="rotate(-40 663 380)" />
        <ellipse cx="599" cy="417" rx="5" ry="3.6" transform="rotate(-40 599 417)" />
      </g>
      <path d="M282 285h6v9h-6zM697 350h6v9h-6zM329 304q11-1 18 10l-14-4z" fill="#5e90ab" stroke="#3a45c8" strokeWidth=".7" />
      <path d="M319 305l22 1M281 294v12M703 352v22" stroke="#3530c8" />

      {/* datum frame */}
      <g strokeWidth=".8">
        <path d="M493 290v-38M493 280l25-15M493 280l25 16v9M493 309l25-15M493 309l46 27M519 292l24-13" stroke="#d4583f" />
        <path d="M493 250l2 8h-4z" fill="#c98a1b" />
        <path d="M493 264v26" stroke="#2a2ac0" />
        <path d="M489 269l4-4 3 3-1 6-5 1z" fill="#1c1ccf" stroke="#1a1a80" />
      </g>
      <text x="490" y="249" fill="#c56b2b" className="text-[10px]">Z</text>

      {/* view triad */}
      <g strokeWidth="1.4">
        <path d="M271 446v-22" stroke="#2222b8" />
        <path d="M271 418l3 9h-6z" fill="#2222b8" />
        <path d="M271 446l19-11" stroke="#53d64a" />
        <path d="M296 432l-5 6-3-5z" fill="#228a25" />
        <path d="M271 446l20 11" stroke="#c21d2f" />
        <path d="M296 460l-8-1 3-5z" fill="#b3122e" />
      </g>
      <text x="268" y="419" fill="#2222b8" className="text-[10px]">Z</text>
      <text x="296" y="434" fill="#63dd55" className="text-[10px]">Y</text>
      <text x="295" y="465" fill="#c21d2f" className="text-[10px]">X</text>
      <path d="M323 170v20l5-4 3 7 3-2-2-6h7z" fill="#fff" stroke="#111" strokeWidth="1.2" />
    </svg>
  )
}

function ViewTool({ label, children, menu }: { label: string; children: ReactNode; menu?: boolean }) {
  return (
    <button aria-label={label} className={`flex shrink-0 items-center gap-[3px] ${menu ? "w-[22px]" : "w-[15px]"}`}>
      <Svg className="size-[11px]">{children}</Svg>
      {menu && <Caret />}
    </button>
  )
}

function Viewport() {
  return (
    <main className="flex min-w-0 flex-1 flex-col">
      <div className="flex h-[14px] shrink-0 items-center">
        <div className="flex h-full w-[118px] items-center justify-end gap-1 bg-white pr-2.5 text-[#333]">
          * 02_Mold DEMO.Z3PRT
          <button aria-label="탭 닫기"><Svg className="size-[6px]"><path d="M2 2l16 16M18 2 2 18" stroke="#63603c" strokeWidth="4" /></Svg></button>
        </div>
        <button aria-label="새 탭" className="ml-1"><Svg className="size-[7px]"><path d="M10 1v18M1 10h18" stroke="#999" strokeWidth="3" /></Svg></button>
        <span className="flex-1" />
        <button aria-label="창 목록" className="mr-0.5"><Svg className="size-[7px]"><path d="M2 4h16M4 9h12l-6 6z" fill="#888" stroke="#777" strokeWidth="2" /></Svg></button>
      </div>
      <div className="relative flex flex-1 flex-col overflow-hidden bg-linear-to-b from-white via-[#d6d6d6] to-[#9c9c9c]">
        <Mold />
        <div role="toolbar" aria-label="보기" className="relative flex h-[14px] items-center pl-[86px]">
          <ViewTool label="나가기"><path d="M6 2h12v16H6M2 10h11M6 6l-4 4 4 4" stroke="#888" strokeWidth="2" /></ViewTool>
          <ViewTool label="좌표계" menu><path d="M2 2v14l15 2" stroke="#59b569" strokeWidth="3" /><path d="M7 9l6-4 6 4-6 6z" fill="#86cf78" /></ViewTool>
          <ViewTool label="지우기"><path d="M5 13l5-6 5 4-5 6z" fill="#a4415c" /><path d="M10 7l5-5 3 3-4 6z" fill="#e7bb5b" /></ViewTool>
          <ViewTool label="형상 표시"><CubeShape top={GOLD[1]} /></ViewTool>
          <ViewTool label="음영" menu><CubeShape top="#63b7d2" left="#2c89ad" right="#155b7c" /></ViewTool>
          <ViewTool label="와이어" menu><path d="M2 6l8-4 8 4v9l-8 4-8-4zM2 6l8 4 8-4M10 10v9" fill="#fff" stroke="#8c9499" strokeWidth="1.2" /></ViewTool>
          <ViewTool label="회전" menu><path d="M2 6l8-4 9 5-2 9-9 3-6-6z" fill="#eeb13c" stroke="#9a5d17" strokeWidth="1.5" /><path d="M2 6l15 10M19 7 8 19M10 2l-2 17" stroke="#9a5d17" /></ViewTool>
          <ViewTool label="확대" menu><path d="M1 1h18v18H1z" fill="#a9c7b8" stroke="#64817f" strokeWidth="2" /><circle cx="10" cy="10" r="6" fill="#e9e3a0" stroke="#888" /></ViewTool>
          <ViewTool label="단면" menu><path d="M4 16a8 8 0 1 1 13-2" stroke="#b1392d" strokeWidth="4" /><path d="M7 12h8" stroke="#555" strokeWidth="2" /></ViewTool>
          <ViewTool label="영역"><path d="M2 3h16v14H2z" fill="#e9f5f7" stroke="#7ba8b0" /><path d="M6 13h2m4-5h2m1 6h2" stroke="#538b95" strokeWidth="2" /></ViewTool>
          <ViewTool label="치수" menu><path d="M3 2v16M17 2v16M3 10h14" stroke="#3b8fa2" strokeWidth="2" /><path d="M3 17h14" stroke="#c44" /></ViewTool>
          <ViewTool label="배경" menu><path d="M2 3h16v11l-8 4-8-4z" fill="#717780" /><path d="M2 9h16v5l-8 4-8-4z" fill="#5c97b7" /></ViewTool>
          <ViewTool label="검정"><path d="M1 5h18v10H1z" fill="#000" /></ViewTool>
          <ViewTool label="하늘색"><path d="M1 1h18v18H1z" fill="#bfe5ee" stroke="#3b5862" strokeWidth="2" /></ViewTool>
          <ViewTool label="레이어" menu><path d="M1 7l9-4 9 4-9 9z" fill="#5ccaba" stroke="#39998f" /><path d="M1 10l9 7 9-7" stroke="#62929c" strokeWidth="2" /></ViewTool>
          <div className="flex h-[13px] shrink-0 items-center border border-[#c8cccf] bg-white pl-1">
            <Svg className="mr-px size-2"><path d="M7 14q-5-6-1-10 4-4 8 0t-1 10zM7 17h6" stroke="#a5a35a" strokeWidth="1.5" fill="#ffffe0" /></Svg>
            <Svg className="size-2"><circle cx="10" cy="10" r="8" fill="#dfe94b" stroke="#8b9240" strokeWidth="2" /></Svg>
            <Select label="현재 레이어" value="Layer0000" className="h-full w-[49px] border-0 bg-transparent text-[#222]" />
          </div>
        </div>
        <p className="relative mt-auto pl-0.5 font-['Noto_Sans',sans-serif] text-[10px] leading-[12px] text-[#222]">360.552mm</p>
      </div>
    </main>
  )
}

const layers = [
  { id: 1, name: "Core", active: false, count: 1, color: "#65b47c" },
  { id: 0, name: "Layer00...", active: true, count: 2, color: "#dfe94b" },
]

function LayerManager() {
  return (
    <aside className="flex w-[209px] shrink-0">
      <div className="flex flex-1 flex-col pl-0.5">
        <PanelTitle title="레이어 관리자" />
        <div className="flex flex-1 flex-col">
          <div className="flex h-[17px] shrink-0 items-center gap-0.5 border-t border-[#cbd2d7] text-[#333]">
            <button aria-label="적용" className="flex h-[13px] w-3 items-center justify-center bg-white">
              <Svg className="size-[10px]"><path d="M6 2h8v12l-8 4z" fill="#4f97a5" /><path d="M5 6h7v3H5zM5 12h8" fill="#d77c4c" stroke="#b65e40" /></Svg>
            </button>
            <span>필터</span>
            <Select label="필터 1" value="모두" className="h-[13px] w-[30px]" />
            <Select label="필터 2" value="모두" className="h-[13px] w-[47px]" />
            <input aria-label="레이어 검색" className="h-[13px] w-0 flex-1 border border-[#d3d8db] bg-white" />
            <button aria-label="새로 고침" className="flex size-[13px] items-center justify-center bg-white">
              <Circle className="size-[10px]" stroke="#3aa3b3" strokeWidth={3} strokeDasharray="7 3" />
            </button>
          </div>
          <div className="flex-1 border border-[#cbd2d7] bg-white">
            <table className="w-full table-fixed border-collapse text-[#222]">
              <colgroup>
                <col className="w-[27px]" /><col className="w-6" /><col className="w-9" /><col className="w-5" /><col className="w-7" /><col className="w-[35px]" /><col />
              </colgroup>
              <thead>
                <tr className="h-[15px] bg-[#f1f3f7] text-[#444] *:border-r *:border-b *:border-[#d5d9dd] *:p-0 *:font-normal">
                  <th>활성</th><th>ID</th>
                  <th><span className="flex items-center justify-center gap-1">이름<Svg className="size-1"><path d="M2 15l8-8 8 8" stroke="#777" strokeWidth="3" /></Svg></span></th>
                  <th>On</th><th>동결</th><th>수량</th><th />
                </tr>
              </thead>
              <tbody>
                {layers.map((layer) => (
                  <tr key={layer.id} className="h-[19px] odd:bg-[#f1f1f1] *:border-r *:border-b *:border-[#e0e3e6] *:px-0.5 *:py-0 *:last:border-0 *:last:bg-white">
                    <td>{layer.active && <Svg className="size-[9px]"><path d="M1 7h9V2l9 8-9 8v-5H1z" fill="#28a828" /></Svg>}</td>
                    <td>{layer.id}</td>
                    <td className="whitespace-nowrap">{layer.name}</td>
                    <td><Svg className="size-2"><path d="M7 14q-5-6-1-10 4-4 8 0t-1 10zM7 17h6" stroke={layer.active ? "#a5a35a" : "#6b9e94"} strokeWidth="1.8" /></Svg></td>
                    <td><Svg className="size-[9px]"><circle cx="10" cy="10" r="7" fill={layer.color} stroke="#6b8a55" strokeWidth="2" /></Svg></td>
                    <td>{layer.count}</td>
                    <td />
                  </tr>
                ))}
              </tbody>
            </table>
          </div>
          <label className="flex h-[15px] shrink-0 items-center gap-[3px] text-[#444]">
            <input type="checkbox" className="size-2 appearance-none border border-[#b9c0c5] bg-[#d5dade]" />
            레이어의 객체 선택
          </label>
          <div className="grid h-[15px] shrink-0 grid-cols-4 gap-px text-[#333]">
            {["불러오기", "내보내기", "새로 만들기", "레이어 규칙"].map((name) => (
              <button key={name} className="whitespace-nowrap border border-[#d0d5d9] bg-white">{name}</button>
            ))}
          </div>
          <button className="mt-0.5 flex h-[15px] shrink-0 items-center gap-1 border border-[#d0d5d9] bg-white pl-0.5 font-bold text-[#444]">
            <Svg className="size-[6px]"><path d="M4 1l12 9-12 9z" fill="#333" /></Svg>카테고리
          </button>
        </div>
      </div>
      <Strip items={rightStrip} side="right" />
    </aside>
  )
}

function StatusBar() {
  const highlighted = "border border-[#dfc564] bg-[#fdeeb0]"
  return (
    <footer className="flex h-[17px] shrink-0 items-center justify-end border-b border-[#34343e]">
      <span className="h-3 w-px bg-[#c3c8cc]" />
      <div className="flex items-center gap-1 pl-2 pr-1">
        <button aria-label="속성 창" className={`flex h-3 w-[14px] items-center justify-center ${highlighted}`}>
          <Svg className="size-[10px]"><path d="M1 2h18v16H1z" fill="#fff" stroke="#557" strokeWidth="2" /><path d="M1 6h18" stroke="#557" strokeWidth="3" /><path d="M5 8v8" stroke="#557" strokeWidth="2" /><path d="M11 10h5M12 9v8" stroke="#a44" strokeWidth="2" /></Svg>
        </button>
        <button aria-label="화면" className={`flex h-3 w-[14px] items-center justify-center ${highlighted}`}>
          <Svg className="size-[10px]"><path d="M1 3h18v10H1z" fill="#35afc0" stroke="#277" /><path d="M7 13h6v4H7z" fill="#567" /></Svg>
        </button>
        <button aria-label="출력 창" className="flex h-3 w-[14px] items-center justify-center">
          <Svg className="size-[10px]"><path d="M2 2h16v16H2z" fill="#fff" stroke="#6985b0" strokeWidth="2" /><path d="M2 6h16M5 10h10M5 14h10" stroke="#6985b0" strokeWidth="2" /></Svg>
        </button>
      </div>
      <output className="h-[14px] w-[219px] self-end bg-white" />
    </footer>
  )
}

export default function App() {
  return (
    <div className="flex min-h-screen flex-col overflow-hidden bg-[#e0e5e8] font-['Lato','Noto_Sans_CJK_KR',sans-serif] text-[8px] leading-3">
      <TopBar />
      <Ribbon />
      <SelectionBar />
      <div className="flex flex-1 gap-0.5">
        <Manager />
        <Viewport />
        <LayerManager />
      </div>
      <StatusBar />
    </div>
  )
}
